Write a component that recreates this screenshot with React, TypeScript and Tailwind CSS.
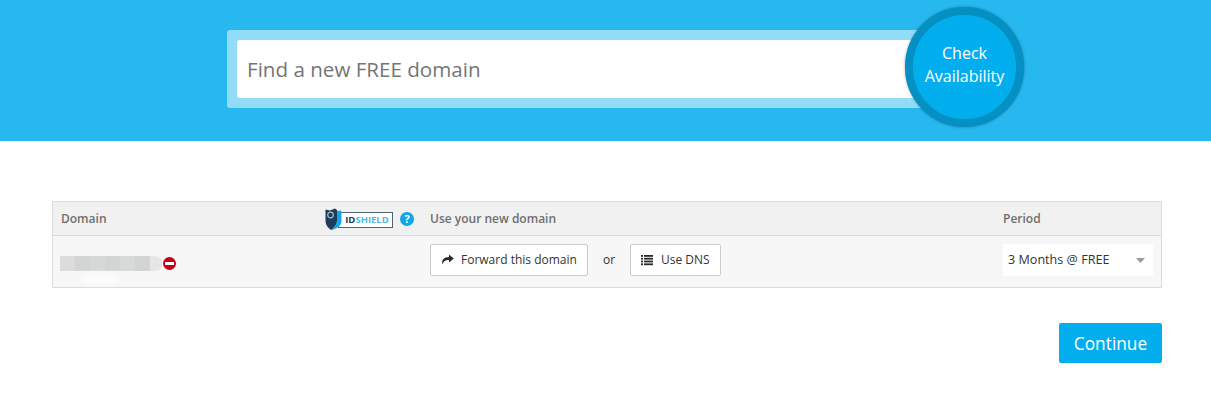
const font = { fontFamily: '"Open Sans", "Noto Sans", sans-serif' };

function ShareIcon() {
  return (
    <svg width="13" height="12" viewBox="0 0 13 12" className="shrink-0">
      <path d="M8 0.6 L12.8 4.6 L8 8.6 V6 C4.8 6 2.6 6.6 1.4 10.6 C0.2 6 3 3 8 3 Z" fill="#2b2b2b" />
    </svg>
  );
}

function ListIcon() {
  return (
    <svg width="12" height="11" viewBox="0 0 12 11" className="shrink-0">
      <g fill="#2b2b2b">
        <rect x="0" y="0" width="2" height="1.8" />
        <rect x="3" y="0" width="9" height="1.8" />
        <rect x="0" y="2.8" width="2" height="1.8" />
        <rect x="3" y="2.8" width="9" height="1.8" />
        <rect x="0" y="5.6" width="2" height="1.8" />
        <rect x="3" y="5.6" width="9" height="1.8" />
        <rect x="0" y="8.4" width="2" height="1.8" />
        <rect x="3" y="8.4" width="9" height="1.8" />
      </g>
    </svg>
  );
}

function ShieldLogo() {
  return (
    <div className="relative h-[22px] w-[68px] shrink-0">
      <div className="absolute left-[13px] top-[4px] flex h-[16px] w-[55px] items-center justify-center border-[1.5px] border-[#4a6578] bg-white pl-[3px] text-[9.5px] leading-none font-bold">
        <span className="text-[#1d3a57]">ID</span>
        <span className="text-[#4fb8e6]">SHIELD</span>
      </div>
      <svg width="17" height="23" viewBox="0 0 17 23" className="absolute top-0 left-0">
        <path d="M0.5 1.5 L5 2.5 L10 0.5 L12 2 V13 C12 17 9 20 6 22 C3 20 0.5 17 0.5 13 Z" fill="#1f3b5c" />
        <path d="M12 3 L16 2.5 L16.5 5 V14 C16 18 11 21 6 22.5 C9 20 11.5 17 12 13 Z" fill="#12a5e6" />
        <circle cx="5.5" cy="7" r="2.8" fill="none" stroke="#a9bccb" strokeWidth="1.2" />
      </svg>
    </div>
  );
}

function QuestionBadge() {
  return (
    <span className="flex h-[14px] w-[14px] items-center justify-center rounded-full bg-[#0ea5e9] text-[11px] leading-none font-bold text-white">
      ?
    </span>
  );
}

function BlurredDomain() {
  return (
    <div className="relative h-[15px] w-[102px] shrink-0">
      <div className="flex h-full w-full blur-[0.5px]">
        <div className="h-full w-[15px] bg-[#dcdcdc]" />
        <div className="h-full w-[15px] bg-[#d3d4d4]" />
        <div className="h-full w-[15px] bg-[#d6d7d7]" />
        <div className="h-full w-[15px] bg-[#d2d4d5]" />
        <div className="h-full w-[15px] bg-[#d8d9d9]" />
        <div className="h-full w-[15px] bg-[#d3d5d5]" />
        <div className="h-full w-[12px] rounded-r-[6px] bg-[#e6e6e6]" />
      </div>
      <div className="absolute left-[22px] top-[17px] h-[11px] w-[36px] bg-[#fbfbfb] blur-[2px]" />
    </div>
  );
}

export default function App() {
  return (
    <div className="h-[406px] w-full overflow-hidden bg-white" style={font}>
      <div className="flex h-[141px] justify-center bg-[#27b8f0] pt-[30px]">
        <div className="relative h-[78px] w-[757px] rounded-[3px] bg-[#93dcf8] p-[10px]">
          <div className="flex h-[58px] items-center rounded-[3px] bg-white pl-[10px] text-[20.6px] text-[#757575]">
            Find a new FREE domain
          </div>
          <div className="absolute left-[678px] top-[-23px] flex h-[120px] w-[119px] items-center justify-center rounded-full border-[8px] border-[#0590c4] bg-[#03aeef] text-center text-[16px] leading-[23px] text-white shadow-[0_0_3px_rgba(0,0,0,0.35)]">
            <span className="-mt-[5px]">
              Check
              <br />
              Availability
            </span>
          </div>
        </div>
      </div>

      <div className="mt-[60px] mr-[49px] ml-[52px] border border-[#dcdcdc] text-[12px]">
        <div className="flex h-[34px] items-center border-b border-[#dcdcdc] bg-[#f1f1f1] font-semibold text-[#6f6f6f]">
          <div className="w-[272px] shrink-0 pl-[8px]">Domain</div>
          <div className="flex w-[105px] shrink-0 items-center gap-[7px]">
            <ShieldLogo />
            <QuestionBadge />
          </div>
          <div className="w-[573px] shrink-0">Use your new domain</div>
          <div>Period</div>
        </div>
        <div className="flex h-[51px] items-center bg-[#f7f7f7] pb-[3px]">
          <div className="flex w-[377px] shrink-0 items-center gap-[1px] pt-[6px] pl-[7px]">
            <BlurredDomain />
            <span className="flex h-[13px] w-[13px] items-center justify-center rounded-full bg-[#c4001a]">
              <span className="h-[3px] w-[9px] bg-white" />
            </span>
          </div>
          <div className="flex w-[573px] shrink-0 items-center text-[#333]">
            <button className="flex h-[32px] w-[158px] items-center gap-[7px] rounded-[2px] border border-[#cccccc] bg-white pl-[10px]">
              <ShareIcon />
              Forward this domain
            </button>
            <span className="mx-[15px] w-[12px] text-center">or</span>
            <button className="flex h-[32px] w-[91px] items-center gap-[8px] rounded-[2px] border border-[#cccccc] bg-white pl-[10px]">
              <ListIcon />
              Use DNS
            </button>
          </div>
          <div className="flex h-[32px] w-[150px] items-center justify-between bg-white pr-[8px] pl-[5px] text-[12.6px] text-[#333]">
            <span>3 Months @ FREE</span>
            <svg width="9" height="5" viewBox="0 0 9 5">
              <path d="M0 0 H9 L4.5 5 Z" fill="#999" />
            </svg>
          </div>
        </div>
      </div>

      <div className="mt-[35px] mr-[49px] flex justify-end">
        <button className="h-[40px] w-[103px] rounded-[2px] bg-[#03aeef] pt-[1px] text-[17.3px] text-white">
          Continue
        </button>
      </div>
    </div>
  );
}
